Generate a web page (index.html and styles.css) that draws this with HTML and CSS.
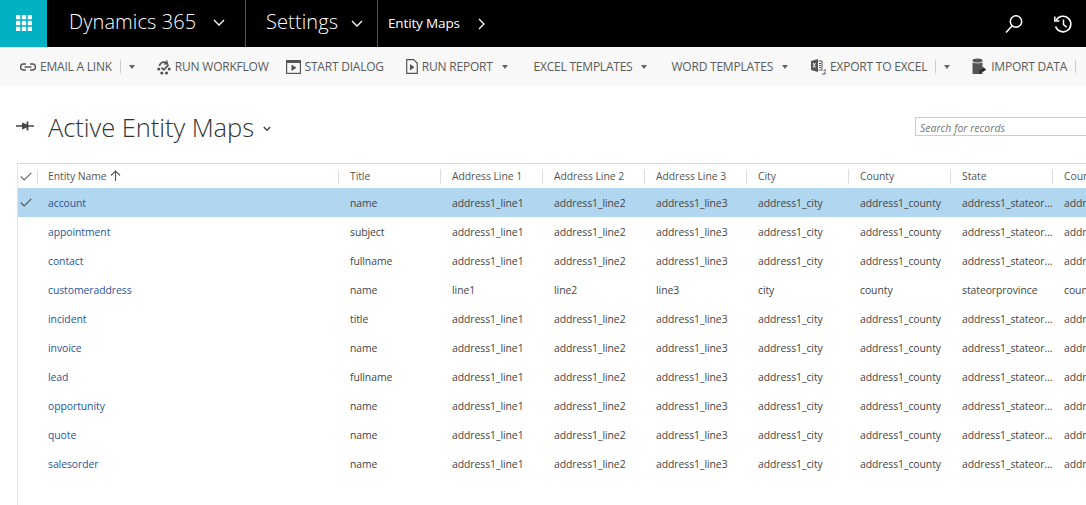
FILE: index.html
```html
<!DOCTYPE html>
<html lang="en">
<head>
<meta charset="utf-8">
<title>Active Entity Maps</title>
<link rel="stylesheet" href="styles.css">
</head>
<body>
<header class="nav">
  <div class="tile"><svg width="16" height="16" viewBox="0 0 18 18" fill="#fff"><rect x="0" y="0" width="4.8" height="4.8"/><rect x="6.6" y="0" width="4.8" height="4.8"/><rect x="13.2" y="0" width="4.8" height="4.8"/><rect x="0" y="6.6" width="4.8" height="4.8"/><rect x="6.6" y="6.6" width="4.8" height="4.8"/><rect x="13.2" y="6.6" width="4.8" height="4.8"/><rect x="0" y="13.2" width="4.8" height="4.8"/><rect x="6.6" y="13.2" width="4.8" height="4.8"/><rect x="13.2" y="13.2" width="4.8" height="4.8"/></svg></div>
  <div class="nav-app"><span class="nav-big">Dynamics 365</span><svg class="chev" width="12" height="7" viewBox="0 0 12 7"><path d="M1 1l5 5 5-5" fill="none" stroke="#fff" stroke-width="1.3"/></svg></div>
  <div class="nav-area"><span class="nav-big">Settings</span><svg class="chev" width="12" height="7" viewBox="0 0 12 7"><path d="M1 1l5 5 5-5" fill="none" stroke="#fff" stroke-width="1.3"/></svg></div>
  <div class="nav-crumb"><span class="nav-small">Entity Maps</span><svg width="7" height="12" viewBox="0 0 7 12"><path d="M1 1l5 5-5 5" fill="none" stroke="#fff" stroke-width="1.3"/></svg></div>
  <div class="nav-right">
    <svg width="20" height="20" viewBox="0 0 20 20"><circle cx="12" cy="7.5" r="5.7" fill="none" stroke="#fff" stroke-width="1.5"/><path d="M8 12L2 18.5" stroke="#fff" stroke-width="1.6"/></svg>
    <svg width="20" height="20" viewBox="0 0 20 20"><path d="M3.3 6A7.8 7.8 0 1 1 2.6 12.5" fill="none" stroke="#fff" stroke-width="1.6"/><path d="M1.8 2.5v4.6h4.6" fill="none" stroke="#fff" stroke-width="1.5"/><path d="M10.5 5.5v5.2l3.2 2.4" fill="none" stroke="#fff" stroke-width="1.5"/></svg>
  </div>
</header>

<div class="toolbar">
  <div class="cmd cmd-email"><svg width="16" height="8" viewBox="0 0 16 8"><path d="M6 1H3.5a3 3 0 0 0 0 6H6M10 1h2.5a3 3 0 0 1 0 6H10M4.5 4h7" fill="none" stroke="#555" stroke-width="1.5"/></svg><span>EMAIL A LINK</span></div>
  <span class="sep"></span><span class="caret caret-a"></span>
  <div class="cmd cmd-wf"><svg width="15" height="16" viewBox="0 0 15 16"><path d="M2.500 7A5.500 5.500 0 0 1 10 2.600L11 .8l1.500 5-5-.4 1.200-1.400A3.600 3.600 0 0 0 4.500 7z" fill="#555"/><circle cx="2.800" cy="10" r="1.600" fill="#555"/><circle cx="5.800" cy="14" r="1.600" fill="#555"/><circle cx="10.500" cy="14" r="1.600" fill="#555"/><circle cx="13.200" cy="10" r="1.500" fill="#555"/><path d="M5.500 8.500l2.200 2.300 4.800-5" fill="none" stroke="#555" stroke-width="1.800"/></svg><span>RUN WORKFLOW</span></div>
  <div class="cmd cmd-dlg"><svg width="15" height="14" viewBox="0 0 15 14"><rect x=".6" y=".6" width="13.800" height="12.800" fill="none" stroke="#555" stroke-width="1.200"/><rect x=".6" y=".6" width="13.800" height="2.400" fill="#555"/><path d="M5.500 4.500l5 3.200-5 3.200z" fill="#555"/></svg><span>START DIALOG</span></div>
  <div class="cmd cmd-rep"><svg width="12" height="15" viewBox="0 0 12 15"><path d="M.7.7h7l3.600 3.600v10H.7z" fill="none" stroke="#555" stroke-width="1.200"/><path d="M4 5l4.500 3.200L4 11.400z" fill="#555"/></svg><span>RUN REPORT</span><span class="caret"></span></div>
  <div class="cmd cmd-xl"><span>EXCEL TEMPLATES</span><span class="caret"></span></div>
  <div class="cmd cmd-wd"><span>WORD TEMPLATES</span><span class="caret"></span></div>
  <div class="cmd cmd-exp"><svg width="15" height="16" viewBox="0 0 15 16"><path d="M0 2l7-2v13l-7-2z" fill="#555"/><path d="M7.500 2h3.500v9h-3.500" fill="none" stroke="#555"/><path d="M8 4.500h2M8 6.500h2M8 8.500h2" stroke="#555"/><path d="M2 4l2.500 4.500M4.500 4L2 8.500" stroke="#f8f8f8"/><path d="M11 15h3v-2.500M12.500 12l1.500-1.500 1 1.500" fill="none" stroke="#555"/></svg><span>EXPORT TO EXCEL</span></div>
  <span class="sep sep-exp"></span><span class="caret caret-b"></span>
  <div class="cmd cmd-imp"><svg width="15" height="17" viewBox="0 0 15 17"><ellipse cx="5.500" cy="2.500" rx="5" ry="2" fill="#555"/><path d="M.5 4.200c1.500 1.300 8.500 1.300 10 0V16H.5z" fill="#555"/><path d="M8 16c0-3 1.500-4.500 4-4.500M10.500 9.500l2.500 2-2.500 2" fill="none" stroke="#222" stroke-width="1.500"/></svg><span>IMPORT DATA</span></div>
  <span class="sep sep-end"></span>
</div>

<main class="page">
  <div class="title-row">
    <svg class="pin" width="18" height="10" viewBox="0 0 18 10"><path d="M0 5h7M11 5h7" stroke="#444" stroke-width="1.300"/><path d="M6 1.500l5 2v3l-5 2z" fill="#444"/><path d="M11.500 .5v9" stroke="#444" stroke-width="1.800"/></svg>
    <h1>Active Entity Maps</h1>
    <svg class="title-chev" width="8" height="6" viewBox="0 0 8 6"><path d="M.8 1l3.200 3.200L7.200 1" fill="none" stroke="#444" stroke-width="1.400"/></svg>
    <div class="search">Search for records</div>
  </div>

  <div class="grid">
    <div class="row head">
      <div class="c check"><svg width="12" height="9" viewBox="0 0 12 9"><path d="M.7 4.500l3.500 3.500L11.300.8" fill="none" stroke="#666" stroke-width="1.100"/></svg></div>
      <div class="c name">Entity Name <svg class="up" width="11" height="11" viewBox="0 0 11 11"><path d="M5.500 11V1M1 5.500L5.500 1 10 5.500" fill="none" stroke="#555" stroke-width="1.100"/></svg></div>
      <div class="c">Title</div><div class="c">Address Line 1</div><div class="c">Address Line 2</div><div class="c">Address Line 3</div><div class="c">City</div><div class="c">County</div><div class="c">State</div><div class="c">Country</div>
    </div>
    <div class="row sel">
      <div class="c check"><svg width="12" height="9" viewBox="0 0 12 9"><path d="M.7 4.500l3.500 3.500L11.300.8" fill="none" stroke="#555" stroke-width="1.100"/></svg></div>
      <div class="c name"><a>account</a></div><div class="c">name</div><div class="c">address1_line1</div><div class="c">address1_line2</div><div class="c">address1_line3</div><div class="c">address1_city</div><div class="c">address1_county</div><div class="c">address1_stateor...</div><div class="c">address1_country</div>
    </div>
    <div class="row"><div class="c check"></div><div class="c name"><a>appointment</a></div><div class="c">subject</div><div class="c">address1_line1</div><div class="c">address1_line2</div><div class="c">address1_line3</div><div class="c">address1_city</div><div class="c">address1_county</div><div class="c">address1_stateor...</div><div class="c">address1_country</div></div>
    <div class="row"><div class="c check"></div><div class="c name"><a>contact</a></div><div class="c">fullname</div><div class="c">address1_line1</div><div class="c">address1_line2</div><div class="c">address1_line3</div><div class="c">address1_city</div><div class="c">address1_county</div><div class="c">address1_stateor...</div><div class="c">address1_country</div></div>
    <div class="row"><div class="c check"></div><div class="c name"><a>customeraddress</a></div><div class="c">name</div><div class="c">line1</div><div class="c">line2</div><div class="c">line3</div><div class="c">city</div><div class="c">county</div><div class="c">stateorprovince</div><div class="c">country</div></div>
    <div class="row"><div class="c check"></div><div class="c name"><a>incident</a></div><div class="c">title</div><div class="c">address1_line1</div><div class="c">address1_line2</div><div class="c">address1_line3</div><div class="c">address1_city</div><div class="c">address1_county</div><div class="c">address1_stateor...</div><div class="c">address1_country</div></div>
    <div class="row"><div class="c check"></div><div class="c name"><a>invoice</a></div><div class="c">name</div><div class="c">address1_line1</div><div class="c">address1_line2</div><div class="c">address1_line3</div><div class="c">address1_city</div><div class="c">address1_county</div><div class="c">address1_stateor...</div><div class="c">address1_country</div></div>
    <div class="row"><div class="c check"></div><div class="c name"><a>lead</a></div><div class="c">fullname</div><div class="c">address1_line1</div><div class="c">address1_line2</div><div class="c">address1_line3</div><div class="c">address1_city</div><div class="c">address1_county</div><div class="c">address1_stateor...</div><div class="c">address1_country</div></div>
    <div class="row"><div class="c check"></div><div class="c name"><a>opportunity</a></div><div class="c">name</div><div class="c">address1_line1</div><div class="c">address1_line2</div><div class="c">address1_line3</div><div class="c">address1_city</div><div class="c">address1_county</div><div class="c">address1_stateor...</div><div class="c">address1_country</div></div>
    <div class="row"><div class="c check"></div><div class="c name"><a>quote</a></div><div class="c">name</div><div class="c">address1_line1</div><div class="c">address1_line2</div><div class="c">address1_line3</div><div class="c">address1_city</div><div class="c">address1_county</div><div class="c">address1_stateor...</div><div class="c">address1_country</div></div>
    <div class="row"><div class="c check"></div><div class="c name"><a>salesorder</a></div><div class="c">name</div><div class="c">address1_line1</div><div class="c">address1_line2</div><div class="c">address1_line3</div><div class="c">address1_city</div><div class="c">address1_county</div><div class="c">address1_stateor...</div><div class="c">address1_country</div></div>
  </div>
</main>
</body>
</html>
```
FILE: styles.css
```css
* { box-sizing: border-box; }
html, body { margin: 0; height: 100%; overflow: hidden; background: #fff; }
body { width: 1086px; height: 505px; font-family: "Open Sans", "Noto Sans", sans-serif; color: #444; }

.nav { display: flex; align-items: stretch; height: 47px; background: #000; color: #fff; }
.tile { width: 47px; background: #00b2c3; display: flex; align-items: center; justify-content: center; padding-bottom: 2px; }
.nav-app { width: 199px; padding: 0 0 5px 22px; display: flex; align-items: center; border-right: 1px solid #555; }
.nav-area { width: 132px; padding: 0 0 5px 20px; display: flex; align-items: center; border-right: 1px solid #555; }
.nav-crumb { padding: 0 0 2px 10px; display: flex; align-items: center; }
.nav-big { font-size: 20px; font-weight: 300; letter-spacing: 0.1px; }
.nav-small { font-size: 13.5px; letter-spacing: -0.15px; }
.nav-app .chev { margin-left: 17px; margin-top: 3px; }
.nav-area .chev { margin-left: 13px; margin-top: 5px; }
.nav-crumb svg { margin-left: 18px; margin-top: 2px; }
.nav-right { margin-left: auto; display: flex; align-items: center; gap: 29px; padding: 0 13px 0 0; }

.toolbar { height: 39px; background: #f8f8f8; display: flex; align-items: center; font-size: 12px; color: #5a5a5a; white-space: nowrap; overflow: hidden; }
.cmd { display: flex; align-items: center; gap: 4px; }
.cmd span:first-of-type { letter-spacing: -0.22px; }
.sep { width: 1px; height: 13px; background: #ccc; }
.caret { width: 0; height: 0; border-left: 3.5px solid transparent; border-right: 3.5px solid transparent; border-top: 4px solid #666; margin-left: 5px; margin-top: 1px; }
.cmd-email { margin-left: 20px; }
.toolbar > .sep { margin-left: 8px; }
.caret-a { margin-left: 8px; }
.cmd-wf { margin-left: 21px; }
.cmd-dlg { margin-left: 17px; }
.cmd-rep { margin-left: 22px; }
.cmd-xl { margin-left: 26px; }
.cmd-wd { margin-left: 24px; }
.cmd-exp { margin-left: 23px; }
.caret-b { margin-left: 8px; }
.cmd-imp { margin-left: 22px; }

.page { padding-left: 16px; height: 419px; overflow: hidden; }
.title-row { height: 77px; display: flex; align-items: flex-start; position: relative; padding-top: 21px; }
.pin { margin-top: 14px; }
h1 { margin: 0 0 0 14px; font-size: 25.5px; font-weight: 300; color: #333; line-height: 40px; letter-spacing: -0.05px; }
.title-chev { margin: 19px 0 0 9px; }
.search { position: absolute; left: 899px; top: 31px; width: 200px; height: 19px; border: 1px solid #ccc; padding: 1px 4px 0; font-size: 10.5px; font-style: italic; color: #777; line-height: 19px; }

.grid { margin-left: 1px; border-left: 1px solid #e4e4e4; border-top: 1px solid #d8d8d8; height: 342px; width: 1100px; font-size: 10.4px; letter-spacing: -0.06px; }
.row { display: grid; grid-template-columns: 19px 301px repeat(8, 102px); height: 29px; align-items: center; white-space: nowrap; color: #444; }
.row.head { height: 24px; padding-top: 1px; }
.row.sel { background: #b1d6f0; }
.c { padding-left: 12px; overflow: hidden; }
.c.check { padding-left: 2px; display: flex; align-items: center; }
.c.name { padding-left: 11px; }
.head .c { height: 15px; line-height: 15px; padding-left: 11px; border-left: 1px solid #ddd; color: #555; }
.head .c.check { border-left: 0; padding-left: 2px; }
.head .c.name { padding-left: 10px; }
.up { vertical-align: -1px; margin-left: 1px; }
a { color: #2a5599; }
```
